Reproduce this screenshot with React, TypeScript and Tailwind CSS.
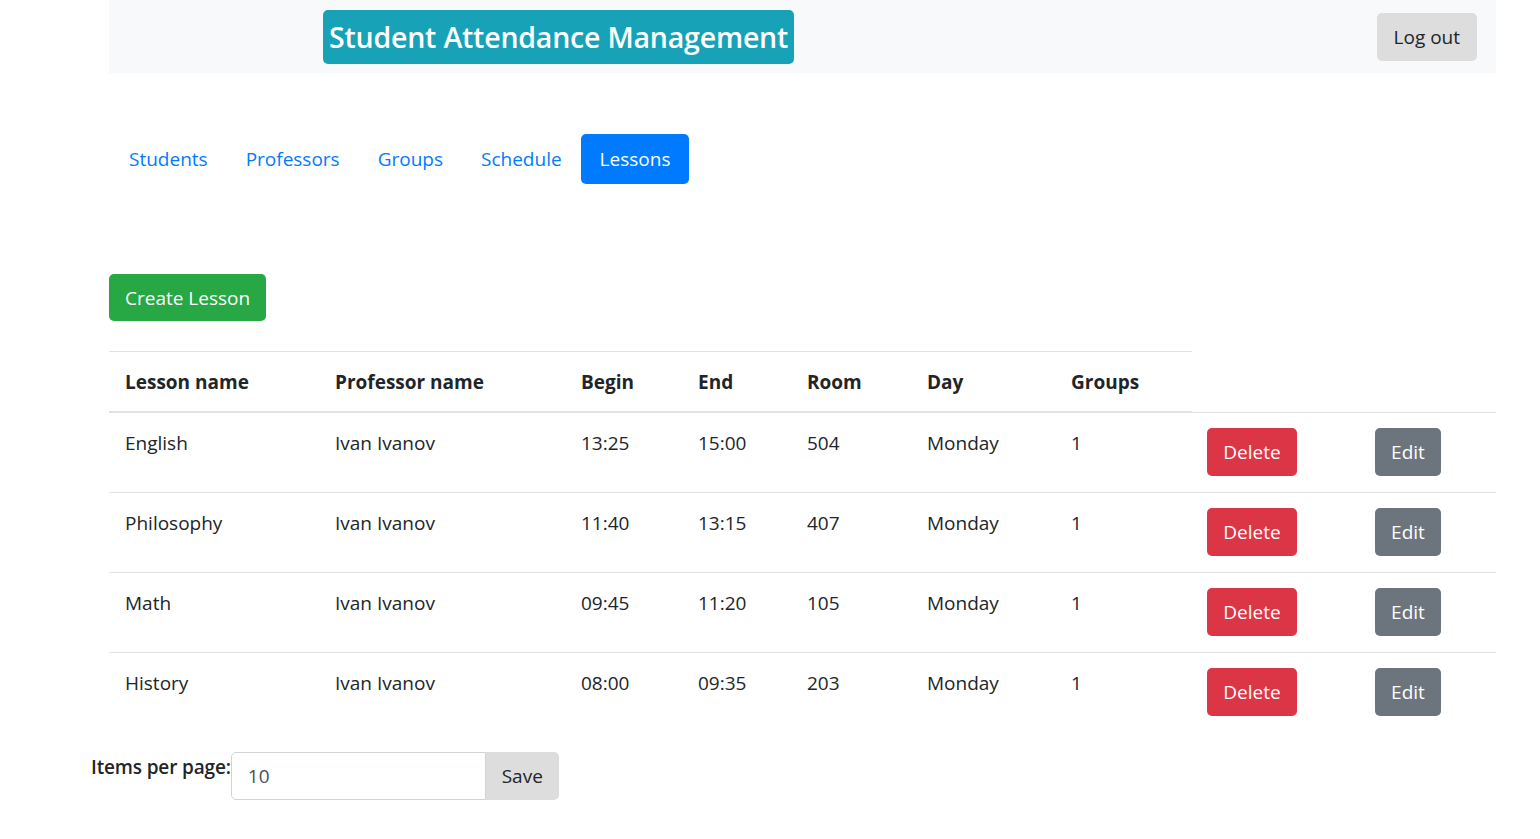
const lessons = [
  { name: 'English', professor: 'Ivan Ivanov', begin: '13:25', end: '15:00', room: '504', day: 'Monday', groups: '1' },
  { name: 'Philosophy', professor: 'Ivan Ivanov', begin: '11:40', end: '13:15', room: '407', day: 'Monday', groups: '1' },
  { name: 'Math', professor: 'Ivan Ivanov', begin: '09:45', end: '11:20', room: '105', day: 'Monday', groups: '1' },
  { name: 'History', professor: 'Ivan Ivanov', begin: '08:00', end: '09:35', room: '203', day: 'Monday', groups: '1' },
];

const tabs = ['Students', 'Professors', 'Groups', 'Schedule', 'Lessons'];
const columns = ['Lesson name', 'Professor name', 'Begin', 'End', 'Room', 'Day', 'Groups'];

export default function App() {
  return (
    <div className="min-h-screen bg-white text-[#212529] text-[19px] leading-[30px] font-['Open_Sans','Noto_Sans',sans-serif]">
      <nav className="ml-[109px] w-[1387px] h-[73px] bg-[#f8f9fa] flex items-center">
        <div className="ml-[214px] h-[54px] px-[6px] flex items-center rounded-[5px] bg-[#17a2b8] text-white text-[28.5px] font-semibold tracking-[-0.2px]">
          Student Attendance Management
        </div>
        <div className="flex-1" />
        <button className="mr-[19px] h-[48px] px-[17px] rounded-[5px] bg-[#dddddd] text-[#212529]">Log out</button>
      </nav>

      <ul className="ml-[110px] mt-[61px] flex">
        {tabs.map((tab) => (
          <li key={tab}>
            <a
              href="#"
              className={
                tab === 'Lessons'
                  ? 'flex h-[50px] items-center px-[19px] rounded-[5px] bg-[#007bff] text-white'
                  : 'flex h-[50px] items-center px-[19px] text-[#007bff]'
              }
            >
              {tab}
            </a>
          </li>
        ))}
      </ul>

      <button className="ml-[109px] mt-[90px] h-[47px] px-[16px] rounded-[5px] bg-[#28a745] text-white">Create Lesson</button>

      <table className="ml-[109px] mt-[30px] w-[1387px] table-fixed border-collapse">
        <colgroup>
          <col className="w-[210px]" />
          <col className="w-[246px]" />
          <col className="w-[117px]" />
          <col className="w-[109px]" />
          <col className="w-[120px]" />
          <col className="w-[144px]" />
          <col className="w-[137px]" />
          <col className="w-[168px]" />
          <col className="w-[136px]" />
        </colgroup>
        <thead>
          <tr>
            {columns.map((col) => (
              <th key={col} className="text-left font-bold px-[16px] pt-[15px] pb-[14px] border-t border-b-2 border-[#dee2e6]">
                {col}
              </th>
            ))}
          </tr>
        </thead>
        <tbody>
          {lessons.map((l) => (
            <tr key={l.name}>
              <td className="align-top px-[16px] pt-[15px] pb-[16px] border-t border-[#dee2e6]">{l.name}</td>
              <td className="align-top px-[16px] pt-[15px] pb-[16px] border-t border-[#dee2e6]">{l.professor}</td>
              <td className="align-top px-[16px] pt-[15px] pb-[16px] border-t border-[#dee2e6]">{l.begin}</td>
              <td className="align-top px-[16px] pt-[15px] pb-[16px] border-t border-[#dee2e6]">{l.end}</td>
              <td className="align-top px-[16px] pt-[15px] pb-[16px] border-t border-[#dee2e6]">{l.room}</td>
              <td className="align-top px-[16px] pt-[15px] pb-[16px] border-t border-[#dee2e6]">{l.day}</td>
              <td className="align-top px-[16px] pt-[15px] pb-[16px] border-t border-[#dee2e6]">{l.groups}</td>
              <td className="align-top px-[15px] pt-[15px] pb-[16px] border-t border-[#dee2e6]">
                <button className="h-[48px] w-[90px] rounded-[5px] bg-[#dc3545] text-white">Delete</button>
              </td>
              <td className="align-top px-[15px] pt-[15px] pb-[16px] border-t border-[#dee2e6]">
                <button className="h-[48px] w-[66px] rounded-[5px] bg-[#6c757d] text-white">Edit</button>
              </td>
            </tr>
          ))}
        </tbody>
      </table>

      <div className="ml-[91px] mt-[20px] flex items-start">
        <label className="font-semibold tracking-[-0.15px]">Items per page:</label>
        <input
          defaultValue="10"
          className="h-[48px] w-[255px] pl-[16px] border border-[#ced4da] rounded-l-[5px] text-[#495057] outline-none"
        />
        <button className="h-[48px] w-[73px] rounded-r-[5px] bg-[#dddddd] text-[#212529]">Save</button>
      </div>
    </div>
  );
}
